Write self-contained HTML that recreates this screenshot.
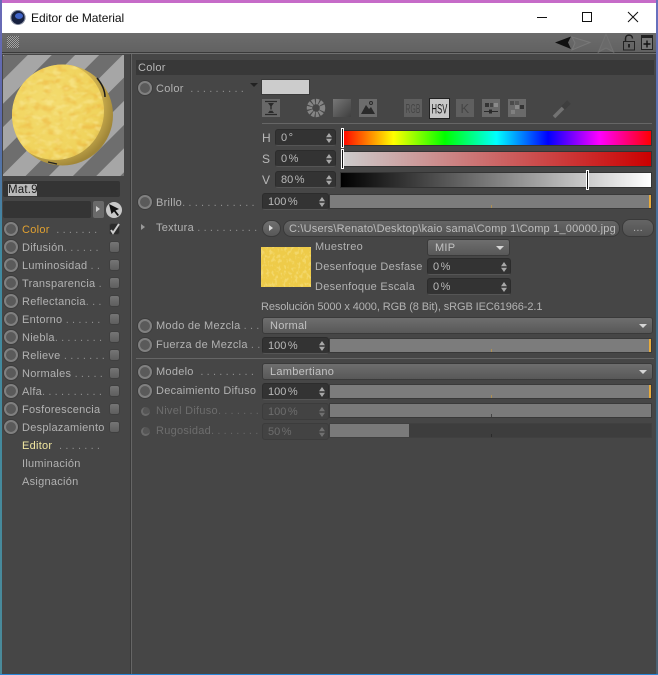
<!DOCTYPE html>
<html><head><meta charset="utf-8"><style>
html,body{margin:0;padding:0;width:658px;height:675px;overflow:hidden;background:#464646}
*{box-sizing:border-box}
body{position:relative;font:11px/16px "Liberation Sans",sans-serif;color:#b2b2b2;letter-spacing:.27px}
div,span.a,svg.a{position:absolute}
.t{white-space:pre;height:16px;margin-top:1px}
.o{color:#8f8f8f;letter-spacing:.1px}
.r{width:14px;height:14px;border-radius:50%;background:#5a5a5a;border:2px solid #808080;box-shadow:0 0 0 1px #3c3c3c}
.r2{width:9px;height:9px;border-radius:50%;background:#555;border-left:2px solid #6a6a6a;border-bottom:2px solid #6a6a6a}
.c{width:11px;height:12px;border-radius:3px;background:linear-gradient(#757575,#5e5e5e);border:1px solid #3f3f3f}
.f{background:#333;border-radius:3px;border:1px solid #2c2c2c;border-bottom-color:#555;height:17px;padding-left:5px;line-height:17px;color:#bababa;letter-spacing:0;word-spacing:-1.500px;white-space:pre}
.f:after{content:"";position:absolute;right:3px;top:3px;width:6px;height:10px;background:#a8a8a8;clip-path:polygon(50% 0,100% 42%,50% 42%,50% 58%,100% 58%,50% 100%,0 58%,50% 58%,50% 42%,0 42%)}
.f.d{color:#6d6d6d;background:#434343;border-color:#3c3c3c}
.f.d:after{opacity:.45}
.s{background:#7c7c7c;height:15px;left:329px;width:323px;border:1px solid #3a3a3a;border-bottom-color:#383838}
.s i{position:absolute;left:161px;bottom:0;width:1px;height:3px;background:#b0904f}
.s b{position:absolute;right:0;top:0;width:2px;height:13px;background:#e8ab3a}
.dd{background:linear-gradient(#6e6e6e,#585858);border-radius:3px;border:1px solid #3a3a3a;height:17px;padding-left:7px;line-height:16px;color:#c2c2c2}
.dd:after{content:"";position:absolute;right:5px;top:6px;border:4px solid transparent;border-top:4px solid #d5d5d5;border-bottom:0}
.bar{height:14px;outline:1px solid #333}
.m{width:3px;height:20px;background:#111;border:1px solid #fff}
.sep{height:1px;background:#666}
</style></head><body>
<!-- desktop edge -->
<div style="left:0;top:0;width:658px;height:3px;background:#c66bc8"></div>
<div style="left:0;top:0;width:2px;height:675px;background:linear-gradient(#6a6ab8 0,#5a6aa8 20%,#3f8aa0 35%,#4a8a9a 100%)"></div>
<div style="left:656px;top:0;width:2px;height:675px;background:linear-gradient(#6a70c0,#3f6f8f 40%,#4a6070 100%)"></div>
<div style="left:0;top:674px;width:658px;height:1px;background:#2a86d8"></div>
<!-- title bar -->
<div style="left:2px;top:3px;width:654px;height:30px;background:#fff"></div>
<svg class="a" style="left:10px;top:9px" width="17" height="17" viewBox="0 0 17 17"><circle cx="8" cy="8.500" r="7.500" fill="#16203f"/><circle cx="8" cy="8.500" r="7" fill="none" stroke="#9aa0b0" stroke-width=".8"/><ellipse cx="9" cy="7" rx="4" ry="3" fill="#3f63c8"/></svg>
<div class="t" style="left:31px;top:9px;color:#111;font-size:12px;letter-spacing:-.05px">Editor de Material</div>
<svg class="a" style="left:530px;top:8px" width="120" height="20" viewBox="0 0 120 20" fill="none" stroke="#111"><path d="M7 9.500H17"/><rect x="52.500" y="4.500" width="9" height="9"/><path d="M98 4L108 14M108 4L98 14"/></svg>
<!-- toolbar -->
<div style="left:2px;top:33px;width:654px;height:19px;background:linear-gradient(#6c6c6c,#626262)"></div>
<div style="left:2px;top:52px;width:654px;height:1px;background:#3a3a3a"></div>
<div style="left:2px;top:53px;width:654px;height:1px;background:#707070"></div>
<div style="left:7px;top:36px;width:12px;height:12px;background:repeating-conic-gradient(#a5a5a5 0 25%,#585858 0 50%) 0 0/2px 2px"></div>
<svg class="a" style="left:554px;top:33px" width="104" height="20" viewBox="0 0 104 20" fill="none"><path d="M1 9.500L17 3.500L14 9.500L17 16Z" fill="#111"/><path d="M18 4L36 9.500L18 17L21 10Z" stroke="#787878" fill="#6a6a6a"/><path d="M44.500 19L52 1L59.500 19L52 15Z" stroke="#727272" fill="#6a6a6a"/><path d="M71.500 9V5.500C71.500 1 78.500 1 78.500 5.500" stroke="#1f1f1f" stroke-width="1.500"/><rect x="69.500" y="8.500" width="11" height="8.500" stroke="#222"/><rect x="74" y="11" width="2" height="3.500" fill="#222"/><rect x="87.500" y="2.500" width="11" height="14" stroke="#222" fill="#777"/><path d="M87 2H99V5H87Z" fill="#222"/><path d="M93 7.500V14.500M89.500 11H96.500" stroke="#111" stroke-width="1.400"/></svg>
<!-- dividers -->
<div style="left:130px;top:54px;width:1px;height:620px;background:#3a3a3a"></div>
<div style="left:131px;top:54px;width:1px;height:620px;background:#666"></div>
<!-- preview -->
<svg class="a" style="left:3px;top:55px" width="121" height="121" viewBox="0 0 121 121">
<defs>
<filter id="n" x="0" y="0" width="100%" height="100%" color-interpolation-filters="sRGB"><feTurbulence type="fractalNoise" baseFrequency=".1 .16" numOctaves="2" seed="5"/><feColorMatrix values="0 0 0 0 .93  0 0 0 0 .68  0 0 0 0 .22  4 0 0 0 -2"/><feGaussianBlur stdDeviation=".6"/></filter>
<filter id="p" x="0" y="0" width="100%" height="100%" color-interpolation-filters="sRGB"><feTurbulence type="fractalNoise" baseFrequency=".12 .2" numOctaves="2" seed="11"/><feColorMatrix values="0 0 0 0 .98  0 0 0 0 .92  0 0 0 0 .6  0 4 0 0 -2"/><feGaussianBlur stdDeviation=".6"/></filter>
<radialGradient id="g" cx=".42" cy=".42" r=".62"><stop offset="0" stop-color="#f4dc70"/><stop offset=".75" stop-color="#f0d35c"/><stop offset="1" stop-color="#d0ae48"/></radialGradient>
<radialGradient id="g2" cx=".4" cy=".4" r=".62"><stop offset=".7" stop-color="#d9bb55"/><stop offset="1" stop-color="#a08638"/></radialGradient>
<clipPath id="base"><circle cx="59.500" cy="60" r="50.500"/></clipPath>
<clipPath id="cp"><circle cx="52" cy="56" r="49"/></clipPath>
<pattern id="st" width="33.500" height="34" patternUnits="userSpaceOnUse" patternTransform="rotate(45) translate(17.500 0)"><rect width="33.500" height="34" fill="#6e6e6e"/><rect width="17" height="34" fill="#a6a6a6"/></pattern></defs>
<rect width="121" height="121" fill="url(#st)"/>
<circle cx="59.500" cy="60" r="50.500" fill="url(#g2)"/>
<path d="M94 23C99 29 102 35 102 42" stroke="#1c1c1c" stroke-width="1.500" fill="none"/>
<path d="M45 107L54 109" stroke="#222" stroke-width="1.200" fill="none"/>
<g clip-path="url(#base)"><g clip-path="url(#cp)">
<rect x="0" y="0" width="110" height="115" fill="url(#g)"/>
<rect x="0" y="0" width="110" height="115" filter="url(#n)" opacity=".42"/>
<rect x="0" y="0" width="110" height="115" filter="url(#p)" opacity=".5"/>
</g></g>
</svg>
<div style="left:3px;top:181px;width:117px;height:16px;background:#343434;border-radius:2px"></div>
<div style="left:8px;top:184px;background:#b9b9b9;color:#1a1a1a;width:29px;height:12px;font-size:11.500px;letter-spacing:.2px;line-height:12px;white-space:pre">Mat.9</div>
<div style="left:3px;top:201px;width:88px;height:17px;background:#343434;border-radius:2px"></div>
<div style="left:93px;top:201px;width:11px;height:17px;background:#6a6a6a;border-radius:2px"></div>
<div style="left:96px;top:206px;border:3.500px solid transparent;border-left:4px solid #ccc;border-right:0"></div>
<svg class="a" style="left:105px;top:201px" width="18" height="18" viewBox="0 0 18 18"><circle cx="9" cy="9" r="8" fill="#c8c8c8"/><path d="M4 3L14 8L10.500 9.500L14 14L12.500 15L9 10.500L6.500 13Z" fill="#111"/></svg>
<!-- channel list -->
<div class="r" style="left:4px;top:222px"></div><div class="t" style="left:22px;top:221px;color:#e0a030">Color  <span class="o">. . . . . . .</span></div><div class="c" style="left:109px;top:223px;background:#2b2b2b"></div><svg class="a" style="left:108px;top:221px" width="14" height="15"><path d="M3 9L5 12L11 3" stroke="#ccc" stroke-width="2" fill="none"/></svg>
<div class="r" style="left:4px;top:240px"></div><div class="t" style="left:22px;top:239px">Difusión<span class="o">. . . . . .</span></div><div class="c" style="left:109px;top:241px"></div>
<div class="r" style="left:4px;top:258px"></div><div class="t" style="left:22px;top:257px">Luminosidad<span class="o"> . .</span></div><div class="c" style="left:109px;top:259px"></div>
<div class="r" style="left:4px;top:276px"></div><div class="t" style="left:22px;top:275px">Transparencia<span class="o"> .</span></div><div class="c" style="left:109px;top:277px"></div>
<div class="r" style="left:4px;top:294px"></div><div class="t" style="left:22px;top:293px">Reflectancia<span class="o">. . .</span></div><div class="c" style="left:109px;top:295px"></div>
<div class="r" style="left:4px;top:312px"></div><div class="t" style="left:22px;top:311px">Entorno <span class="o">. . . . . .</span></div><div class="c" style="left:109px;top:313px"></div>
<div class="r" style="left:4px;top:330px"></div><div class="t" style="left:22px;top:329px">Niebla<span class="o">. . . . . . . .</span></div><div class="c" style="left:109px;top:331px"></div>
<div class="r" style="left:4px;top:348px"></div><div class="t" style="left:22px;top:347px">Relieve <span class="o">. . . . . . .</span></div><div class="c" style="left:109px;top:349px"></div>
<div class="r" style="left:4px;top:366px"></div><div class="t" style="left:22px;top:365px">Normales <span class="o">. . . . .</span></div><div class="c" style="left:109px;top:367px"></div>
<div class="r" style="left:4px;top:384px"></div><div class="t" style="left:22px;top:383px">Alfa<span class="o">. . . . . . . . . .</span></div><div class="c" style="left:109px;top:385px"></div>
<div class="r" style="left:4px;top:402px"></div><div class="t" style="left:22px;top:401px">Fosforescencia</div><div class="c" style="left:109px;top:403px"></div>
<div class="r" style="left:4px;top:420px"></div><div class="t" style="left:22px;top:419px">Desplazamiento</div><div class="c" style="left:109px;top:421px"></div>
<div class="t" style="left:22px;top:437px;color:#f0e6a0">Editor  <span class="o">. . . . . . .</span></div>
<div class="t" style="left:22px;top:455px">Iluminación</div>
<div class="t" style="left:22px;top:473px">Asignación</div>
<!-- header -->
<div style="left:136px;top:60px;width:518px;height:15px;background:#383838;line-height:16px;padding-left:2px;color:#b8b8b8">Color</div>
<!-- color row -->
<div class="r" style="left:138px;top:81px"></div><div class="t" style="left:156px;top:80px">Color  <span class="o">. . . . . . . . .</span></div>
<div style="left:250px;top:83px;border:4px solid transparent;border-top:4px solid #222;border-bottom:0"></div>
<div style="left:262px;top:80px;width:47px;height:14px;background:#ccc;outline:1px solid #3a3a3a"></div>
<svg class="a" style="left:262px;top:98px" width="320" height="21" viewBox="0 0 320 21">
<defs><linearGradient id="sq" x1="0" y1="0" x2="1" y2="1"><stop offset="0" stop-color="#777"/><stop offset="1" stop-color="#3f3f3f"/></linearGradient></defs>
<rect x="0" y="1" width="18" height="18" fill="#686868"/><path d="M3 3.500H15M3 16.500H15" stroke="#2a2a2a" stroke-width="1.200"/><path d="M6 5H12L9 9ZM6 15H12L9 11ZM8.300 7H9.700V13H8.300Z" fill="#2a2a2a"/>
<circle cx="54" cy="10" r="6.500" fill="none" stroke="#858585" stroke-width="5.500" stroke-dasharray="2.800 1"/>
<rect x="71" y="1" width="18" height="18" fill="url(#sq)"/>
<rect x="97" y="1" width="18" height="18" fill="#6c6c6c"/><path d="M99 16L104 7L107 11L109 9L113 16Z" fill="#2a2a2a"/><circle cx="109" cy="5" r="1.500" fill="none" stroke="#2a2a2a"/>
<rect x="142" y="1" width="18" height="18" fill="#5f5f5f"/>
<rect x="167.500" y=".5" width="20" height="20" fill="#c7c7c7" stroke="#222"/>
<rect x="194" y="1" width="18" height="18" fill="#5f5f5f"/>
<rect x="220" y="1" width="18" height="18" fill="#6a6a6a"/><path d="M222 13.500H236" stroke="#2a2a2a"/><rect x="227" y="11.500" width="3" height="4" fill="#2a2a2a"/><rect x="223" y="5" width="4" height="4" fill="#333"/><rect x="228" y="5" width="3" height="4" fill="#444"/><rect x="232" y="5" width="4" height="4" fill="#8a8a8a"/>
<rect x="246" y="1" width="18" height="18" fill="#6a6a6a"/><rect x="248" y="3" width="4" height="4" fill="#4a4a4a"/><rect x="253" y="3" width="4" height="4" fill="#555"/><rect x="258" y="7" width="4" height="4" fill="#333"/><rect x="249" y="12" width="4" height="4" fill="#808080"/><rect x="253" y="7" width="4" height="4" fill="#8a8a8a"/>
<path d="M292 19L302 9" stroke="#727272" stroke-width="3.500"/><path d="M301 10L307 4" stroke="#3e3e3e" stroke-width="5"/>
<text x="151" y="15" font-family="Liberation Sans" font-size="13" text-anchor="middle" fill="#454545" textLength="15" lengthAdjust="spacingAndGlyphs">RGB</text>
<text x="177.500" y="15.500" font-family="Liberation Sans" font-size="14" text-anchor="middle" fill="#111" textLength="16" lengthAdjust="spacingAndGlyphs">HSV</text>
<text x="203" y="15" font-family="Liberation Sans" font-size="13" text-anchor="middle" fill="#454545">K</text>
</svg>
<div class="sep" style="left:262px;top:123px;width:390px"></div>
<!-- HSV -->
<div class="t" style="left:262px;top:129px;color:#b8b8b8;font-size:12px">H</div><div class="f" style="left:275px;top:129px;width:61px">0 °</div>
<div class="t" style="left:262px;top:150px;color:#b8b8b8;font-size:12px">S</div><div class="f" style="left:275px;top:150px;width:61px">0 %</div>
<div class="t" style="left:262px;top:171px;color:#b8b8b8;font-size:12px">V</div><div class="f" style="left:275px;top:171px;width:61px">80 %</div>
<div class="bar" style="left:342px;width:309px;top:131px;background:linear-gradient(90deg,#f00,#ff0 16.700%,#0f0 33.300%,#0ff 50%,#00f 66.700%,#f0f 83.300%,#f00)"></div>
<div class="bar" style="left:342px;width:309px;top:152px;background:linear-gradient(90deg,#ccc,#c00)"></div>
<div class="bar" style="left:341px;width:310px;top:173px;background:linear-gradient(90deg,#000,#fff)"></div>
<div class="m" style="left:341px;top:128px"></div>
<div class="m" style="left:341px;top:149px"></div>
<div class="m" style="left:586px;top:170px"></div>
<!-- brillo -->
<div class="r" style="left:138px;top:195px"></div><div class="t" style="left:156px;top:194px">Brillo<span class="o">. . . . . . . . . . . .</span></div>
<div class="f" style="left:262px;top:193px;width:67px">100 %</div>
<div class="s" style="top:194px"><i></i><b></b></div>
<!-- textura -->
<div style="left:141px;top:224px;border:3.500px solid transparent;border-left:4px solid #999;border-right:0"></div>
<div class="t" style="left:156px;top:219px">Textura <span class="o">. . . . . . . . . .</span></div>
<div style="left:262px;top:220px;width:19px;height:17px;background:linear-gradient(#707070,#575757);border-radius:9px;border:1px solid #3a3a3a"></div>
<div style="left:269px;top:225px;border:3.500px solid transparent;border-left:4px solid #ddd;border-right:0"></div>
<div style="left:283px;top:220px;width:337px;height:17px;background:linear-gradient(#656565,#525252);border-radius:8px;border:1px solid #3a3a3a;padding-left:5px;line-height:16px;color:#bdbdbd;letter-spacing:.2px;overflow:hidden;white-space:pre">C:\Users\Renato\Desktop\kaio sama\Comp 1\Comp 1_00000.jpg</div>
<div style="left:622px;top:219px;width:32px;height:18px;background:linear-gradient(#656565,#525252);border-radius:8px;border:1px solid #3a3a3a;text-align:center;line-height:17px">...</div>
<svg class="a" style="left:261px;top:247px" width="50" height="40"><defs><filter id="n2" x="0" y="0" width="100%" height="100%" color-interpolation-filters="sRGB"><feTurbulence type="fractalNoise" baseFrequency=".35 .25" numOctaves="2" seed="3"/><feColorMatrix values="0 0 0 0 .97  0 0 0 0 .88  0 0 0 0 .5  5 0 0 0 -2.500"/></filter></defs><rect width="50" height="40" fill="#eecb49"/><rect width="50" height="40" filter="url(#n2)" opacity=".6"/></svg>
<div class="t" style="left:315px;top:238px">Muestreo</div>
<div class="t" style="left:315px;top:258px">Desenfoque Desfase</div>
<div class="t" style="left:315px;top:278px">Desenfoque Escala</div>
<div class="dd" style="left:427px;top:239px;width:83px">MIP</div>
<div class="f" style="left:427px;top:258px;width:84px">0 %</div>
<div class="f" style="left:427px;top:278px;width:84px">0 %</div>
<div class="t" style="left:261px;top:298px;letter-spacing:-.1px">Resolución 5000 x 4000, RGB (8 Bit), sRGB IEC61966-2.1</div>
<!-- modo -->
<div class="r" style="left:138px;top:319px"></div><div class="t" style="left:156px;top:317px">Modo de Mezcla<span class="o"> . . .</span></div>
<div class="dd" style="left:262px;top:317px;width:391px">Normal</div>
<div class="r" style="left:138px;top:338px"></div><div class="t" style="left:156px;top:336px">Fuerza de Mezcla<span class="o"> . .</span></div>
<div class="f" style="left:262px;top:337px;width:67px">100 %</div>
<div class="s" style="top:338px"><i></i><b></b></div>
<div class="sep" style="left:136px;top:358px;width:518px"></div>
<div class="r" style="left:138px;top:365px"></div><div class="t" style="left:156px;top:363px">Modelo  <span class="o">. . . . . . . . .</span></div>
<div class="dd" style="left:262px;top:363px;width:391px">Lambertiano</div>
<div class="r" style="left:138px;top:384px"></div><div class="t" style="left:156px;top:382px">Decaimiento Difuso</div>
<div class="f" style="left:262px;top:383px;width:67px">100 %</div>
<div class="s" style="top:384px"><i></i><b></b></div>
<div class="r2" style="left:141px;top:407px"></div><div class="t" style="left:156px;top:402px;color:#6d6d6d">Nivel Difuso<span class="o" style="color:#666">. . . . . . .</span></div>
<div class="f d" style="left:262px;top:403px;width:67px">100 %</div>
<div class="s" style="top:403px;background:#7a7a7a"><i style="background:#444"></i></div>
<div class="r2" style="left:141px;top:427px"></div><div class="t" style="left:156px;top:422px;color:#6d6d6d">Rugosidad<span class="o" style="color:#666">. . . . . . . .</span></div>
<div class="f d" style="left:262px;top:423px;width:67px">50 %</div>
<div class="s" style="top:423px;background:#3d3d3d;border-color:#404040"><div style="left:0;top:0;width:79px;height:13px;background:#7a7a7a"></div><i style="background:#2a2a2a"></i></div>
</body></html>
